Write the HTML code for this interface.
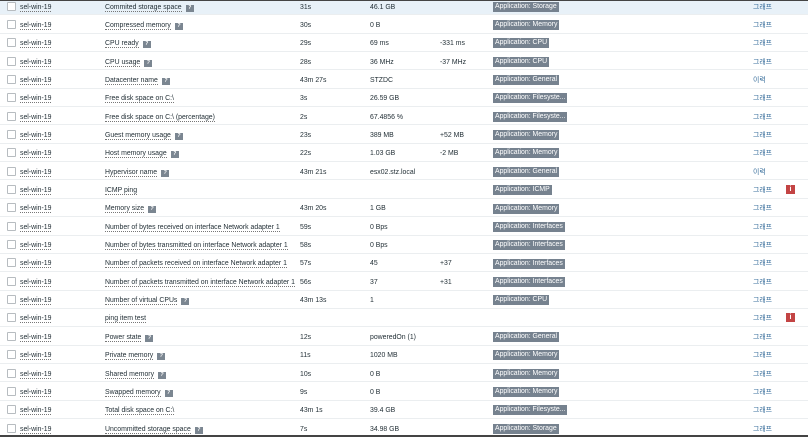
<!DOCTYPE html>
<html><head><meta charset="utf-8"><style>
*{margin:0;padding:0;box-sizing:border-box}
body{width:808px;height:437px;overflow:hidden;background:#fff;font-family:"Liberation Sans","Noto Sans CJK KR",sans-serif;font-size:6.9px;color:#1f2c33;position:relative}
.topb{position:absolute;left:0;top:0;width:808px;height:1px;background:#444}
.botb{position:absolute;left:0;top:435px;width:808px;height:2px;background:#444}
.r{position:absolute;left:0;width:808px;height:18.35px;border-bottom:1px solid #ebeef0;line-height:18px}
.r.h{background:#e8f1f8}
.r>*{position:absolute;top:1.5px;white-space:nowrap;height:18px}
.cb{left:7px;top:4.5px!important;width:9px;height:9px!important;border:1px solid #b7bcc0;background:#fff;border-radius:1px}
.host{left:20px}
.u{border-bottom:1px dotted #777;padding-bottom:0px}
.nm{left:105px}
.q{display:inline-block;width:8px;height:7px;background:#7b8691;color:#fff;font-size:5px;text-align:center;line-height:7px;margin-left:4px;vertical-align:0px;font-weight:bold}
.iv{left:300px}.vl{left:370px}.ch{left:440px}
.tg{left:493px}
.tg b{font-weight:normal;background:#76828f;color:#fff;padding:1px 2px;display:inline-block;line-height:8px;max-width:76px;overflow:hidden;vertical-align:middle}
.lk{left:753px;color:#3a6f9c}
.er{left:786px;top:4.5px!important;width:9px;height:9px!important;background:#c34444;color:#fff;font-size:7px;text-align:center;line-height:9px;font-weight:bold}
</style></head><body>
<div id="c"></div>
<script>
var d=[
["Commited storage space",1,"31s","46.1 GB","","Storage","그래프",0],
["Compressed memory",1,"30s","0 B","","Memory","그래프",0],
["CPU ready",1,"29s","69 ms","-331 ms","CPU","그래프",0],
["CPU usage",1,"28s","36 MHz","-37 MHz","CPU","그래프",0],
["Datacenter name",1,"43m 27s","STZDC","","General","이력",0],
["Free disk space on C:\\",0,"3s","26.59 GB","","Filesyste...","그래프",0],
["Free disk space on C:\\ (percentage)",0,"2s","67.4856 %","","Filesyste...","그래프",0],
["Guest memory usage",1,"23s","389 MB","+52 MB","Memory","그래프",0],
["Host memory usage",1,"22s","1.03 GB","-2 MB","Memory","그래프",0],
["Hypervisor name",1,"43m 21s","esx02.stz.local","","General","이력",0],
["ICMP ping",0,"","","","ICMP","그래프",1],
["Memory size",1,"43m 20s","1 GB","","Memory","그래프",0],
["Number of bytes received on interface Network adapter 1",0,"59s","0 Bps","","Interfaces","그래프",0],
["Number of bytes transmitted on interface Network adapter 1",0,"58s","0 Bps","","Interfaces","그래프",0],
["Number of packets received on interface Network adapter 1",0,"57s","45","+37","Interfaces","그래프",0],
["Number of packets transmitted on interface Network adapter 1",0,"56s","37","+31","Interfaces","그래프",0],
["Number of virtual CPUs",1,"43m 13s","1","","CPU","그래프",0],
["ping item test",0,"","","","","그래프",1],
["Power state",1,"12s","poweredOn (1)","","General","그래프",0],
["Private memory",1,"11s","1020 MB","","Memory","그래프",0],
["Shared memory",1,"10s","0 B","","Memory","그래프",0],
["Swapped memory",1,"9s","0 B","","Memory","그래프",0],
["Total disk space on C:\\",0,"43m 1s","39.4 GB","","Filesyste...","그래프",0],
["Uncommitted storage space",1,"7s","34.98 GB","","Storage","그래프",0]];
var h='';
d.forEach(function(x,i){
h+='<div class="r'+(i==0?' h':'')+'" style="top:'+(-3+i*18.35)+'px"><div class="cb"></div><div class="host"><span class="u">sel-win-19</span></div><div class="nm"><span class="u">'+x[0]+'</span>'+(x[1]?'<i class="q">?</i>':'')+'</div><div class="iv">'+x[2]+'</div><div class="vl">'+x[3]+'</div><div class="ch">'+x[4]+'</div>'+(x[5]?'<div class="tg"><b>Application: '+x[5]+'</b></div>':'')+'<div class="lk">'+x[6]+'</div>'+(x[7]?'<div class="er">i</div>':'')+'</div>';
});
document.getElementById('c').innerHTML=h;
</script>
<div class="topb"></div><div class="botb"></div>
</body></html>
